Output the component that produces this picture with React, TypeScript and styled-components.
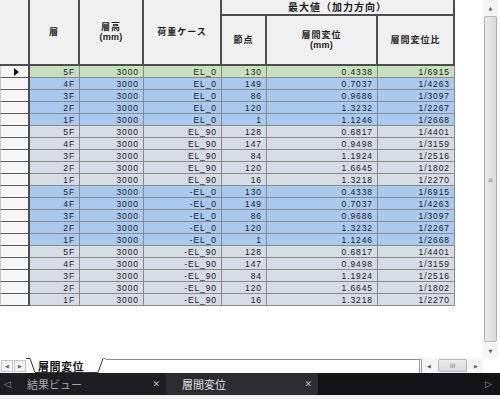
import styled, { createGlobalStyle } from "styled-components";

const GlobalStyle = createGlobalStyle`
	html, body {
		margin: 0;
		padding: 0;
		background: #ffffff;
		overflow: hidden;
	}
	* {
		box-sizing: border-box;
	}
`;

const COLS = "30px 50px 64px 78px 45px 111px 77px";

type Kind = "current" | "blue" | "gray";

interface IRow {
	floor: string;
	load: string;
	node: string;
	disp: string;
	ratio: string;
}

const BASE_0 = [
	["5F", "130", "0.4338", "1/6915"],
	["4F", "149", "0.7037", "1/4263"],
	["3F", "86", "0.9686", "1/3097"],
	["2F", "120", "1.3232", "1/2267"],
	["1F", "1", "1.1246", "1/2668"],
];

const BASE_90 = [
	["5F", "128", "0.6817", "1/4401"],
	["4F", "147", "0.9498", "1/3159"],
	["3F", "84", "1.1924", "1/2516"],
	["2F", "120", "1.6645", "1/1802"],
	["1F", "16", "1.3218", "1/2270"],
];

const build = (base: string[][], load: string): IRow[] =>
	base.map(([floor, node, disp, ratio]) => ({ floor, load, node, disp, ratio }));

const rows: IRow[] = [
	...build(BASE_0, "EL_0"),
	...build(BASE_90, "EL_90"),
	...build(BASE_0, "-EL_0"),
	...build(BASE_90, "-EL_90"),
];

const kindOf = (i: number): Kind => {
	if (i === 0) return "current";
	return Math.floor(i / 5) % 2 === 0 ? "blue" : "gray";
};

const BG: Record<Kind, string> = {
	current: "#c5dfbf",
	blue: "#a9c9ef",
	gray: "#d6dce4",
};

const Frame = styled.div`
	display: flex;
	flex-direction: column;
	width: 500px;
	height: 399px;
	background: #ffffff;
	overflow: hidden;
`;

const Main = styled.div`
	display: flex;
	height: 358px;
`;

const GridArea = styled.div`
	flex: 1;
	background: #ffffff;
`;

const Grid = styled.div`
	width: 455px;
`;

const Head = styled.div`
	display: grid;
	grid-template-columns: ${COLS};
	grid-template-rows: 16px 50px;
`;

const HeadCell = styled.div<{ $rows?: number; $cols?: number; $big?: boolean }>`
	grid-row: span ${(p) => p.$rows ?? 1};
	grid-column: span ${(p) => p.$cols ?? 1};
	display: flex;
	flex-direction: column;
	align-items: center;
	justify-content: center;
	background: #f0f0f0;
	border-right: 2px solid #4e4e4e;
	border-bottom: 2px solid #4e4e4e;
	font-family: "Noto Sans CJK JP", sans-serif;
	font-size: ${(p) => (p.$big ? "10px" : "9px")};
	font-weight: 700;
	line-height: 10px;
	letter-spacing: 1px;
	color: #1e1e1e;
	text-align: center;
`;

const Small = styled.span`
	font-family: "Liberation Sans", sans-serif;
	font-size: 9px;
	font-weight: 700;
	letter-spacing: 0.3px;
`;

const Row = styled.div`
	display: grid;
	grid-template-columns: ${COLS};
	height: 12px;
`;

const RowHead = styled.div`
	position: relative;
	background: #f6f6f6;
	border-right: 2px solid #4e4e4e;
	border-bottom: 1px solid #5c5c5c;
	border-left: 1px solid #c8c8c8;
`;

const Pointer = styled.span`
	position: absolute;
	left: 13px;
	top: 2px;
	width: 0;
	height: 0;
	border-top: 4px solid transparent;
	border-bottom: 4px solid transparent;
	border-left: 5px solid #111111;
`;

const Cell = styled.div<{ $kind: Kind }>`
	display: flex;
	align-items: center;
	justify-content: flex-end;
	padding-right: 4px;
	background: ${(p) => BG[p.$kind]};
	border-right: 1px solid #8a8a8a;
	border-bottom: 1px solid #8a8a8a;
	font-family: "Liberation Sans", sans-serif;
	font-size: 8.5px;
	letter-spacing: 0.9px;
	color: #1a1a1a;
	white-space: nowrap;
`;

const VScroll = styled.div`
	display: flex;
	flex-direction: column;
	align-items: stretch;
	width: 15px;
	margin-right: 2px;
	background: #f4f4f4;
`;

const Arrow = styled.div`
	display: flex;
	align-items: center;
	justify-content: center;
	height: 15px;
	flex-shrink: 0;
	font-size: 5px;
	color: #606060;
	font-family: "DejaVu Sans", sans-serif;
`;

const VThumb = styled.div`
	flex: 1;
	margin: 1px 1px;
	display: flex;
	align-items: center;
	justify-content: center;
	background: linear-gradient(to right, #e9e9e9, #dcdcdc);
	border: 1px solid #b4b4b4;
	border-radius: 2px;
	font-size: 6px;
	color: #777777;
	font-family: "DejaVu Sans", sans-serif;
`;

const SheetBar = styled.div`
	display: flex;
	align-items: stretch;
	height: 15px;
	background: #ffffff;
`;

const SheetNav = styled.div`
	display: flex;
	gap: 1px;
	padding: 2px 0 0 1px;
`;

const NavBtn = styled.div`
	display: flex;
	align-items: center;
	justify-content: center;
	width: 12px;
	height: 12px;
	background: #f2f2f2;
	border: 1px solid #c4c4c4;
	font-size: 5px;
	color: #666666;
	font-family: "DejaVu Sans", sans-serif;
`;

const SheetTab = styled.div`
	position: relative;
	display: flex;
	align-items: center;
	width: 80px;
	padding-left: 12px;
	font-family: "Noto Sans CJK JP", sans-serif;
	font-size: 11px;
	font-weight: 700;
	color: #111111;
	letter-spacing: 0.5px;
	svg {
		position: absolute;
		left: 0;
		top: 0;
	}
	span {
		position: relative;
	}
`;

const TabStrip = styled.div`
	flex: 1;
	border-top: 1px solid #8a8a8a;
	border-right: 3px double #9a9a9a;
	margin-top: 1px;
`;

const HScroll = styled.div`
	display: flex;
	align-items: stretch;
	width: 61px;
	background: #f4f4f4;
`;

const HArrow = styled(Arrow)`
	width: 14px;
	height: auto;
`;

const HThumb = styled(VThumb)`
	margin: 1px 2px;
	background: linear-gradient(to bottom, #ececec, #dadada);
`;

const Corner = styled.div`
	width: 17px;
	background: #ffffff;
`;

const DocTabs = styled.div`
	display: flex;
	align-items: stretch;
	height: 22px;
	background: #141417;
	font-family: "Noto Sans CJK JP", sans-serif;
	font-size: 11px;
`;

const DocTab = styled.div<{ $active?: boolean }>`
	display: flex;
	align-items: center;
	justify-content: space-between;
	width: ${(p) => (p.$active ? "152px" : "166px")};
	padding: ${(p) => (p.$active ? "0 6px 0 16px" : "0 6px 0 4px")};
	background: ${(p) => (p.$active ? "#2c2c31" : "#1e1e22")};
	color: ${(p) => (p.$active ? "#e2e2e2" : "#a8a8ac")};
`;

const DocTitle = styled.span<{ $pad?: number }>`
	flex: 1;
	padding-left: ${(p) => p.$pad ?? 0}px;
`;

const Glyph = styled.span<{ $color?: string }>`
	font-family: "DejaVu Sans", sans-serif;
	font-size: 9px;
	color: ${(p) => p.$color ?? "#bdbdbd"};
`;

const DocRest = styled.div`
	flex: 1;
	display: flex;
	align-items: center;
	justify-content: flex-end;
	padding-right: 8px;
`;

const Footer = styled.div`
	flex: 1;
	background: #f2f2f2;
`;

function App() {
	return (
		<Frame>
			<GlobalStyle />
			<Main>
				<GridArea>
					<Grid>
						<Head>
							<HeadCell $rows={2} />
							<HeadCell $rows={2}>層</HeadCell>
							<HeadCell $rows={2}>
								層高
								<Small>(mm)</Small>
							</HeadCell>
							<HeadCell $rows={2}>荷重ケース</HeadCell>
							<HeadCell $cols={3} $big>
								最大値（加力方向）
							</HeadCell>
							<HeadCell>節点</HeadCell>
							<HeadCell>
								層間変位
								<Small>(mm)</Small>
							</HeadCell>
							<HeadCell>層間変位比</HeadCell>
						</Head>
						{rows.map((r, i) => {
							const k = kindOf(i);
							return (
								<Row key={i}>
									<RowHead>{i === 0 && <Pointer />}</RowHead>
									<Cell $kind={k}>{r.floor}</Cell>
									<Cell $kind={k}>3000</Cell>
									<Cell $kind={k}>{r.load}</Cell>
									<Cell $kind={k}>{r.node}</Cell>
									<Cell $kind={k}>{r.disp}</Cell>
									<Cell $kind={k}>{r.ratio}</Cell>
								</Row>
							);
						})}
					</Grid>
				</GridArea>
				<VScroll>
					<Arrow>▲</Arrow>
					<VThumb>≡</VThumb>
					<Arrow>▼</Arrow>
				</VScroll>
			</Main>
			<SheetBar>
				<SheetNav>
					<NavBtn>◀</NavBtn>
					<NavBtn>▶</NavBtn>
				</SheetNav>
				<SheetTab>
					<svg width="80" height="15" viewBox="0 0 80 15">
						<path d="M0 0.5 L4 0.5 L9 14.5 L72 14.5 L77 0.5" fill="#ffffff" stroke="#333333" strokeWidth="1" />
						<path d="M77 0.5 L80 0.5" stroke="#8a8a8a" strokeWidth="1" />
					</svg>
					<span>層間変位</span>
				</SheetTab>
				<TabStrip />
				<HScroll>
					<HArrow>◀</HArrow>
					<HThumb>III</HThumb>
					<HArrow>▶</HArrow>
				</HScroll>
				<Corner />
			</SheetBar>
			<DocTabs>
				<DocTab>
					<Glyph $color="#9a9a9a">◁</Glyph>
					<DocTitle $pad={16}>結果ビュー</DocTitle>
					<Glyph>✕</Glyph>
				</DocTab>
				<DocTab $active>
					<DocTitle>層間変位</DocTitle>
					<Glyph>✕</Glyph>
				</DocTab>
				<DocRest>
					<Glyph $color="#9a9a9a">▷</Glyph>
				</DocRest>
			</DocTabs>
			<Footer />
		</Frame>
	);
}

export default App;
